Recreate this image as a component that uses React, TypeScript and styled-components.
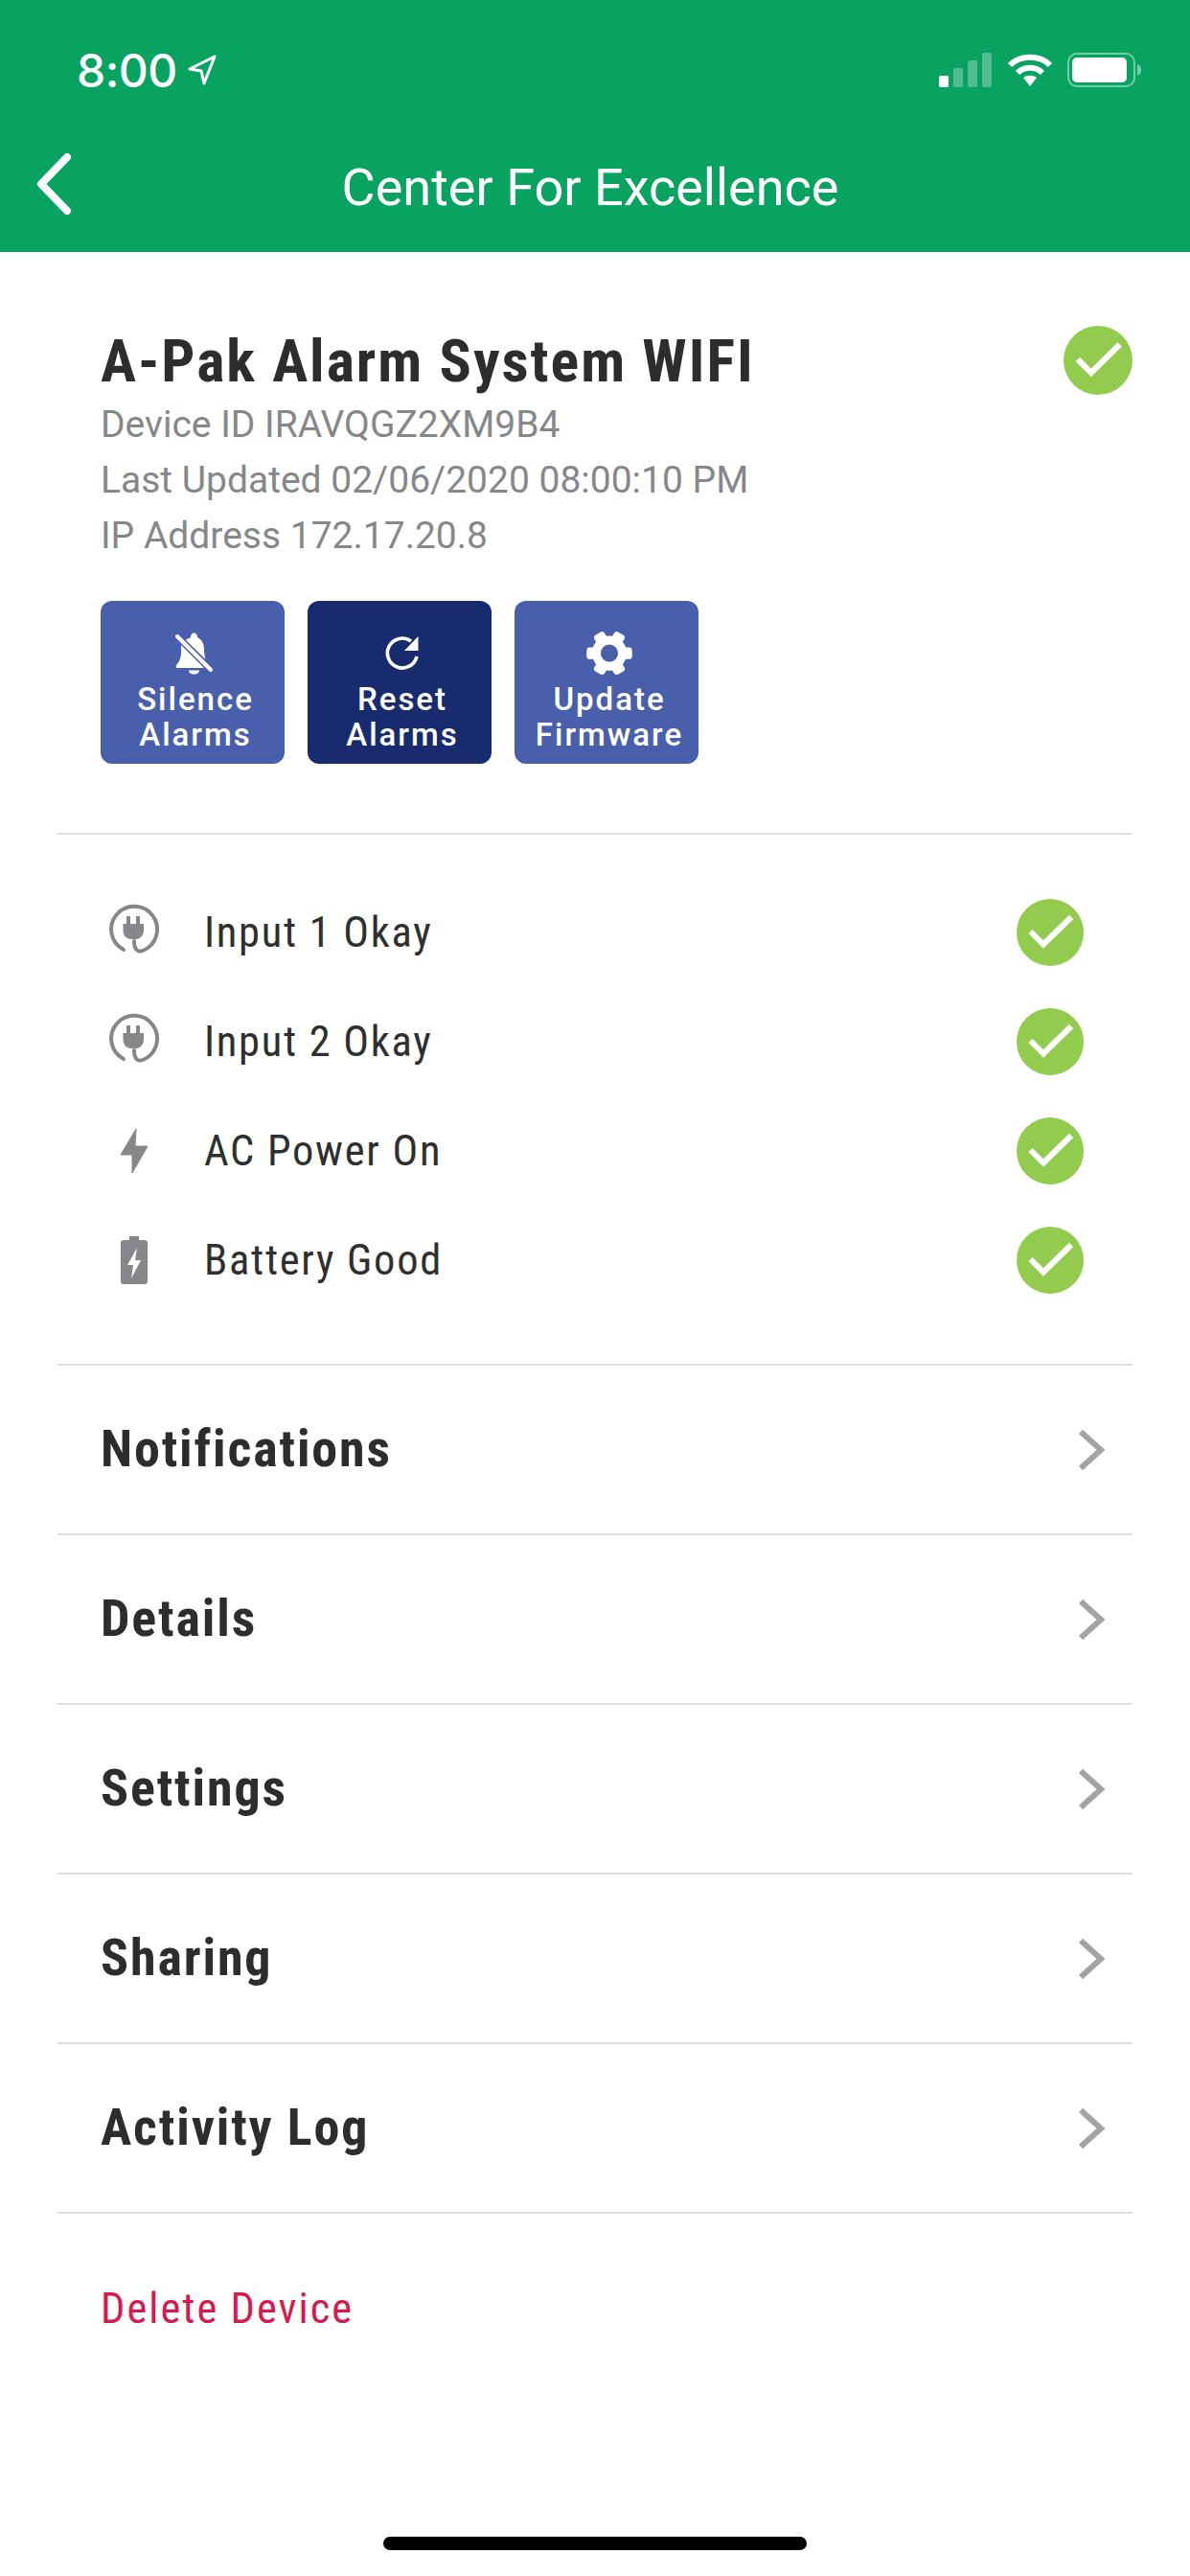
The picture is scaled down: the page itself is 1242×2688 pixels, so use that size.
import { ReactNode } from 'react';
import styled, { createGlobalStyle } from 'styled-components';

const GlobalStyle = createGlobalStyle`
    html, body {
        margin: 0;
        padding: 0;
        background: #fff;
    }
`;

const CheckBadge = ({ size }: { size: number }) => (
    <svg width={size} height={size} viewBox="0 0 70 70">
        <circle cx="35" cy="35" r="35" fill="#93cb4f" />
        <path d="M14.5 34 L28 47.5 L57 19" fill="none" stroke="#fff" strokeWidth="6" />
    </svg>
);

const PlugIcon = () => (
    <svg width="70" height="70" viewBox="0 2 70 70">
        <path
            d="M24 55 A24 24 0 1 1 44 56 C39 58 35 55 35 46"
            fill="none"
            stroke="#85878b"
            strokeWidth="4"
            strokeLinecap="round"
        />
        <path
            d="M27 20 h4 v8 h6 v-8 h4 v8 h4 v7 C45 40 41 44 37 44 H32 C27 44 23.5 40 23.5 35 v-7 h3.5 z"
            fill="#85878b"
        />
    </svg>
);

const BoltIcon = () => (
    <svg width="30" height="48" viewBox="0 0 30 48">
        <path d="M17 1 L1 28 H13 L13 47 L29 19 H16 Z" fill="#85878b" stroke="#85878b" strokeWidth="1" strokeLinejoin="round" />
    </svg>
);

const BatteryIcon = () => (
    <svg width="28" height="50" viewBox="0 0 28 50">
        <path
            d="M9 0 h10 v4 h6 a3 3 0 0 1 3 3 v40 a3 3 0 0 1 -3 3 h-22 a3 3 0 0 1 -3 -3 v-40 a3 3 0 0 1 3 -3 h6 z"
            fill="#85878b"
        />
        <path d="M17 12 L7 30 H13 L11 44 L21 25 H15 Z" fill="#fff" />
    </svg>
);

const BellOffIcon = () => (
    <svg width="70" height="70" viewBox="0 0 70 70">
        <path
            d="M25 18 C27 16 30 15.5 30 15 C30 12 31.5 10.5 33.5 10.5 C35.5 10.5 37 12 37 15 C41 17 44 21 44 27 C44 31 44.5 34 45.5 38 Z"
            fill="#fff"
        />
        <path d="M20 23 L44 47 H16 C14.5 47 14 45 15.5 43.5 C18.5 40 20 36 20 31 Z" fill="#fff" />
        <path d="M28 49.5 H39 C39 52 36.5 53.5 33.5 53.5 C30.5 53.5 28 52 28 49.5 Z" fill="#fff" />
        <path d="M16 14 L51 49" fill="none" stroke="#fff" strokeWidth="4" strokeLinecap="round" />
    </svg>
);

const ResetIcon = () => (
    <svg width="70" height="70" viewBox="0 0 70 70">
        <path
            d="M44 19 A15.5 15.5 0 1 0 50 35"
            fill="none"
            stroke="#fff"
            strokeWidth="3.6"
        />
        <path d="M51.5 14 V29 H37 Z" fill="#fff" />
    </svg>
);

const GearIcon = () => (
    <svg width="52" height="52" viewBox="0 3 46 46">
        <circle cx="23" cy="23" r="12" fill="none" stroke="#fff" strokeWidth="8" />
        {[0, 60, 120, 180, 240, 300].map((angle) => (
            <rect key={angle} x="35" y="17.5" width="9" height="11" rx="3" fill="#fff" transform={`rotate(${angle} 23 23)`} />
        ))}
    </svg>
);

const Chevron = () => (
    <svg width="30" height="44" viewBox="0 0 30 44">
        <path d="M4 3 L25 22 L4 41" fill="none" stroke="#a3a3a5" strokeWidth="6" />
    </svg>
);

const SignalIcon = () => (
    <svg width="56" height="36" viewBox="0 0 56 36">
        <rect x="0" y="24" width="10" height="12" rx="2" fill="#fff" />
        <rect x="15" y="16" width="10" height="20" rx="2" fill="#fff" opacity="0.3" />
        <rect x="30" y="8" width="10" height="28" rx="2" fill="#fff" opacity="0.3" />
        <rect x="45" y="0" width="10" height="36" rx="2" fill="#fff" opacity="0.3" />
    </svg>
);

const WifiIcon = () => (
    <svg width="48" height="36" viewBox="0 0 48 36">
        <path d="M3 13 C14 2 34 2 45 13" fill="none" stroke="#fff" strokeWidth="6" />
        <path d="M11 21 C18 14 30 14 37 21" fill="none" stroke="#fff" strokeWidth="6" />
        <path d="M17 26 C21 23 27 23 31 26 L24 35 Z" fill="#fff" />
    </svg>
);

const BatteryStatus = () => (
    <svg width="78" height="36" viewBox="0 0 78 36">
        <rect x="1" y="1" width="69" height="34" rx="9" fill="none" stroke="#fff" strokeOpacity="0.45" strokeWidth="2" />
        <rect x="5" y="5" width="57" height="26" rx="5" fill="#fff" />
        <path d="M73 12 C76 13 77 15 77 18 C77 21 76 23 73 24 Z" fill="#fff" fillOpacity="0.45" />
    </svg>
);

interface ActionProps {
    icon: ReactNode;
    first: string;
    second: string;
    dark?: boolean;
}

const Action = ({ icon, first, second, dark }: ActionProps) => (
    <ActionButton $dark={dark}>
        <ActionIcon>{icon}</ActionIcon>
        <span>{first}</span>
        <span>{second}</span>
    </ActionButton>
);

const statusRows: { icon: ReactNode; label: string }[] = [
    { icon: <PlugIcon />, label: 'Input 1 Okay' },
    { icon: <PlugIcon />, label: 'Input 2 Okay' },
    { icon: <BoltIcon />, label: 'AC Power On' },
    { icon: <BatteryIcon />, label: 'Battery Good' },
];

const menuItems = ['Notifications', 'Details', 'Settings', 'Sharing', 'Activity Log'];

const App = () => (
    <Page>
        <GlobalStyle />
        <Header>
            <StatusBar>
                <Clock>
                    <span>8:00</span>
                    <svg width="30" height="32" viewBox="0 0 30 32">
                        <path d="M28 2 L2 15 L14 17 L17 30 Z" fill="none" stroke="#fff" strokeWidth="3" strokeLinejoin="round" />
                    </svg>
                </Clock>
                <StatusIcons>
                    <SignalIcon />
                    <WifiIcon />
                    <BatteryStatus />
                </StatusIcons>
            </StatusBar>
            <NavBar>
                <BackIcon width="44" height="66" viewBox="0 0 44 66">
                    <path d="M36 5 L9 33 L36 61" fill="none" stroke="#fff" strokeWidth="8" strokeLinecap="round" strokeLinejoin="round" />
                </BackIcon>
                <NavTitle>Center For Excellence</NavTitle>
            </NavBar>
        </Header>
        <Content>
            <Summary>
                <TitleRow>
                    <DeviceName>A-Pak Alarm System WIFI</DeviceName>
                    <CheckBadge size={72} />
                </TitleRow>
                <Meta>Device ID IRAVQGZ2XM9B4</Meta>
                <Meta>Last Updated 02/06/2020 08:00:10 PM</Meta>
                <Meta>IP Address 172.17.20.8</Meta>
                <Actions>
                    <Action icon={<BellOffIcon />} first="Silence" second="Alarms" />
                    <Action icon={<ResetIcon />} first="Reset" second="Alarms" dark />
                    <Action icon={<GearIcon />} first="Update" second="Firmware" />
                </Actions>
            </Summary>
            <StatusList>
                {statusRows.map((row) => (
                    <StatusRow key={row.label}>
                        <StatusIcon>{row.icon}</StatusIcon>
                        <StatusLabel>{row.label}</StatusLabel>
                        <CheckBadge size={70} />
                    </StatusRow>
                ))}
            </StatusList>
            {menuItems.map((item) => (
                <MenuRow key={item}>
                    <MenuLabel>{item}</MenuLabel>
                    <Chevron />
                </MenuRow>
            ))}
            <DeleteLink>Delete Device</DeleteLink>
        </Content>
        <HomeBar />
    </Page>
);

const Page = styled.div`
    width: 1242px;
    height: 2688px;
    display: flex;
    flex-direction: column;
    background: #fff;
    overflow: hidden;
    font-family: Roboto, "Liberation Sans", sans-serif;
`;

const Header = styled.header`
    height: 263px;
    flex-shrink: 0;
    background: #08a361;
    color: #fff;
`;

const StatusBar = styled.div`
    height: 146px;
    box-sizing: border-box;
    padding: 46px 50px 0 80px;
    display: flex;
    justify-content: space-between;
    align-items: flex-start;
`;

const Clock = styled.div`
    display: flex;
    align-items: center;
    gap: 11px;
    height: 54px;
    font-family: Inter, sans-serif;
    font-size: 48px;
    font-weight: 500;
    letter-spacing: -0.5px;
`;

const StatusIcons = styled.div`
    display: flex;
    align-items: center;
    gap: 15px;
    height: 54px;
`;

const NavBar = styled.div`
    height: 98px;
    position: relative;
    display: flex;
    align-items: center;
    justify-content: center;
`;

const BackIcon = styled.svg`
    position: absolute;
    left: 34px;
    top: 13px;
`;

const NavTitle = styled.div`
    margin-left: -10px;
    font-size: 54px;
    font-weight: 400;
`;

const Content = styled.main`
    flex: 1;
    margin: 0 60px;
    display: flex;
    flex-direction: column;
`;

const Summary = styled.section`
    height: 608px;
    box-sizing: border-box;
    padding: 77px 0 0 45px;
    border-bottom: 2px solid #dedede;
`;

const TitleRow = styled.div`
    height: 72px;
    display: flex;
    justify-content: space-between;
    align-items: center;
    margin-bottom: 2px;
`;

const DeviceName = styled.h1`
    margin: 0;
    color: #2d2d2d;
    font-size: 62px;
    font-weight: 700;
    letter-spacing: 1.95px;
    font-stretch: 75%;
    white-space: nowrap;
`;

const Meta = styled.div`
    height: 58px;
    line-height: 58px;
    color: #85878b;
    font-size: 39px;
    font-weight: 400;
`;

const Actions = styled.div`
    display: flex;
    gap: 24px;
    margin-top: 39px;
`;

const ActionButton = styled.div<{ $dark?: boolean }>`
    width: 192px;
    height: 170px;
    box-sizing: border-box;
    padding: 31px 0 0 6px;
    border-radius: 12px;
    background: ${({ $dark }) => ($dark ? '#172b6e' : '#4a5fab')};
    color: #fff;
    display: flex;
    flex-direction: column;
    align-items: center;
    font-size: 33px;
    font-weight: 500;
    line-height: 37px;
    letter-spacing: 2px;
`;

const ActionIcon = styled.div`
    height: 53px;
    display: flex;
    align-items: center;
    justify-content: center;
`;

const StatusList = styled.section`
    height: 554px;
    box-sizing: border-box;
    padding: 45px 51px 0 0;
    border-bottom: 2px solid #dedede;
`;

const StatusRow = styled.div`
    height: 114px;
    display: flex;
    align-items: center;
`;

const StatusIcon = styled.div`
    width: 110px;
    margin-right: 43px;
    box-sizing: border-box;
    padding-left: 50px;
    display: flex;
    align-items: center;
    justify-content: center;

    svg {
        flex-shrink: 0;
    }
`;

const StatusLabel = styled.div`
    flex: 1;
    color: #2f2f2f;
    font-size: 44.5px;
    font-weight: 400;
    letter-spacing: 1.7px;
    font-stretch: 75%;
`;

const MenuRow = styled.div`
    height: 177px;
    box-sizing: border-box;
    padding: 0 28px 0 45px;
    display: flex;
    justify-content: space-between;
    align-items: center;
    border-bottom: 2px solid #dedede;
`;

const MenuLabel = styled.div`
    margin-top: -2px;
    color: #2d2d2d;
    font-size: 54px;
    font-weight: 700;
    letter-spacing: 1.85px;
    font-stretch: 75%;
`;

const DeleteLink = styled.div`
    margin: 73px 0 0 45px;
    color: #d41a4f;
    font-size: 44.5px;
    letter-spacing: 2px;
    font-stretch: 75%;
`;

const HomeBar = styled.div`
    width: 442px;
    height: 14px;
    flex-shrink: 0;
    align-self: center;
    margin-bottom: 27px;
    border-radius: 7px;
    background: #000;
`;

export default App;
